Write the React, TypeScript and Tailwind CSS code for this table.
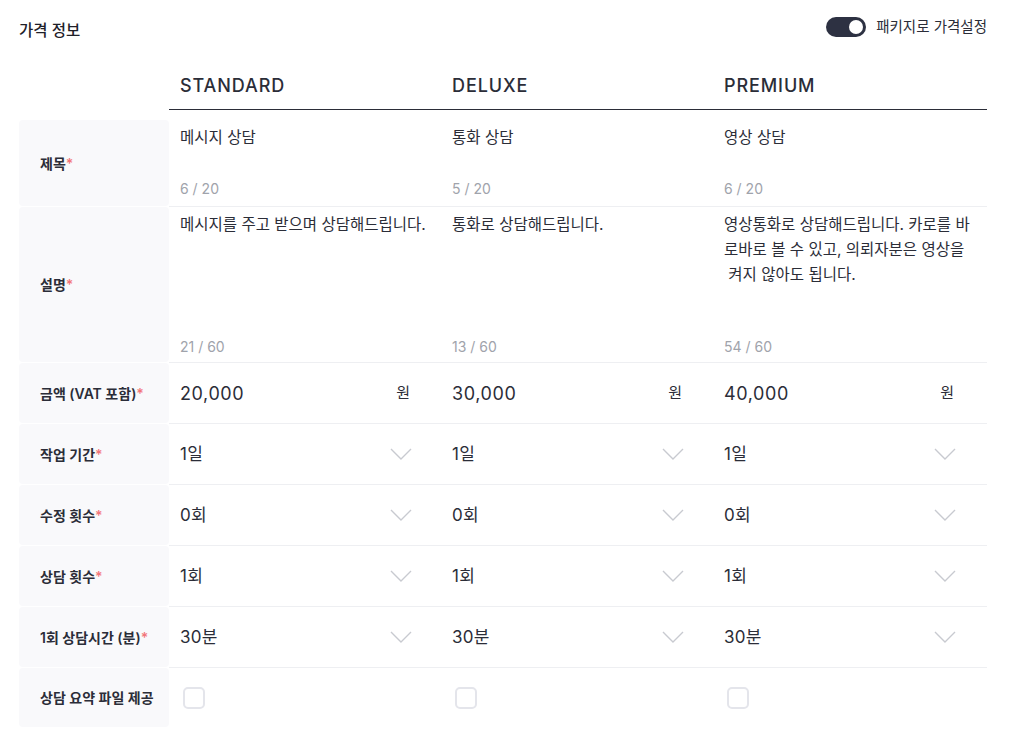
const font = { fontFamily: "Inter, 'Noto Sans CJK KR', sans-serif" };

type Pkg = {
  name: string;
  title: string;
  titleCount: string;
  desc: string;
  descCount: string;
  price: string;
  days: string;
  revisions: string;
  sessions: string;
  minutes: string;
};

const packages: Pkg[] = [
  {
    name: "STANDARD",
    title: "메시지 상담",
    titleCount: "6 / 20",
    desc: "메시지를 주고 받으며 상담해드립니다.",
    descCount: "21 / 60",
    price: "20,000",
    days: "1일",
    revisions: "0회",
    sessions: "1회",
    minutes: "30분",
  },
  {
    name: "DELUXE",
    title: "통화 상담",
    titleCount: "5 / 20",
    desc: "통화로 상담해드립니다.",
    descCount: "13 / 60",
    price: "30,000",
    days: "1일",
    revisions: "0회",
    sessions: "1회",
    minutes: "30분",
  },
  {
    name: "PREMIUM",
    title: "영상 상담",
    titleCount: "6 / 20",
    desc: "영상통화로 상담해드립니다. 카로를 바\n로바로 볼 수 있고, 의뢰자분은 영상을\n 켜지 않아도 됩니다.",
    descCount: "54 / 60",
    price: "40,000",
    days: "1일",
    revisions: "0회",
    sessions: "1회",
    minutes: "30분",
  },
];

function Label({ text, required = true }: { text: string; required?: boolean }) {
  return (
    <div className="mb-px flex w-[150px] shrink-0 items-center rounded-[4px] bg-[#f9f9fb] pl-[21px] text-[14px] font-semibold text-[#2b2d38]">
      {text}
      {required && <span className="text-[#f2767a]">*</span>}
    </div>
  );
}

function Row({
  label,
  required,
  height,
  last,
  children,
}: {
  label: string;
  required?: boolean;
  height: string;
  last?: boolean;
  children: (p: Pkg) => React.ReactNode;
}) {
  return (
    <div className="flex">
      <Label text={label} required={required} />
      <div className={["flex flex-1", last ? "" : "border-b border-[#eeeff2]"].join(" ")}>
        {packages.map((p) => (
          <div key={p.name} className={["w-[272px] pl-[11px]", height].join(" ")}>
            {children(p)}
          </div>
        ))}
      </div>
    </div>
  );
}

function Chevron() {
  return (
    <svg width="22" height="12" viewBox="0 0 22 12" fill="none" className="text-[#c8cad0]">
      <polyline points="1,1 11,11 21,1" stroke="currentColor" strokeWidth="1.4" strokeLinejoin="miter" />
    </svg>
  );
}

function Select({ value }: { value: string }) {
  return (
    <div className="flex h-full items-center justify-between pr-[29px] text-[17px] text-[#2b2d38]">
      <span className="tracking-[0.3px]">{value}</span>
      <Chevron />
    </div>
  );
}

export default function App() {
  return (
    <div className="min-h-[744px] bg-white pl-[19px] pr-[31px]" style={font}>
      <div className="flex items-center justify-between pt-[15px]">
        <h2 className="pt-[4px] text-[15.5px] font-medium text-[#1f2029]">가격 정보</h2>
        <div className="-mt-[3px] flex items-center gap-[10px]">
          <div className="relative h-[20px] w-[40px] rounded-full bg-[#2d3142]">
            <span className="absolute right-[3px] top-[3px] h-[14px] w-[14px] rounded-full bg-white" />
          </div>
          <span className="text-[14.5px] text-[#2b2d38]">패키지로 가격설정</span>
        </div>
      </div>

      <div className="ml-[150px] mt-[30px] flex border-b border-[#2b2d38] pb-[10px]">
        {packages.map((p) => (
          <div key={p.name} className="w-[272px] pl-[11px] text-[18px] font-medium tracking-[0.9px] text-[#2b2d38]">
            {p.name}
          </div>
        ))}
      </div>

      <div className="mt-[10px]">
        <Row label="제목" height="h-[86px]">
          {(p) => (
            <div className="flex h-full flex-col justify-between pb-[7px] pt-[6px]">
              <span className="text-[15.5px] text-[#2b2d38]">{p.title}</span>
              <span className="text-[14px] text-[#a0a3ab]">{p.titleCount}</span>
            </div>
          )}
        </Row>
        <Row label="설명" height="h-[155px]">
          {(p) => (
            <div className="flex h-full flex-col justify-between pb-[5px] pt-[5px]">
              <span className="whitespace-pre text-[15.5px] leading-[25px] text-[#2b2d38]">{p.desc}</span>
              <span className="text-[14px] text-[#a0a3ab]">{p.descCount}</span>
            </div>
          )}
        </Row>
        <Row label="금액 (VAT 포함)" height="h-[60px]">
          {(p) => (
            <div className="flex h-full items-center justify-between pr-[31px] text-[#2b2d38]">
              <span className="text-[18px] tracking-[0.6px]">{p.price}</span>
              <span className="text-[15px]">원</span>
            </div>
          )}
        </Row>
        <Row label="작업 기간" height="h-[60px]">
          {(p) => <Select value={p.days} />}
        </Row>
        <Row label="수정 횟수" height="h-[60px]">
          {(p) => <Select value={p.revisions} />}
        </Row>
        <Row label="상담 횟수" height="h-[60px]">
          {(p) => <Select value={p.sessions} />}
        </Row>
        <Row label="1회 상담시간 (분)" height="h-[60px]">
          {(p) => <Select value={p.minutes} />}
        </Row>
        <Row label="상담 요약 파일 제공" required={false} height="h-[60px]" last>
          {() => (
            <div className="flex h-full items-center pl-[3px]">
              <span className="h-[22px] w-[22px] rounded-[5px] border-2 border-[#e4e5eb] bg-white" />
            </div>
          )}
        </Row>
      </div>
    </div>
  );
}
